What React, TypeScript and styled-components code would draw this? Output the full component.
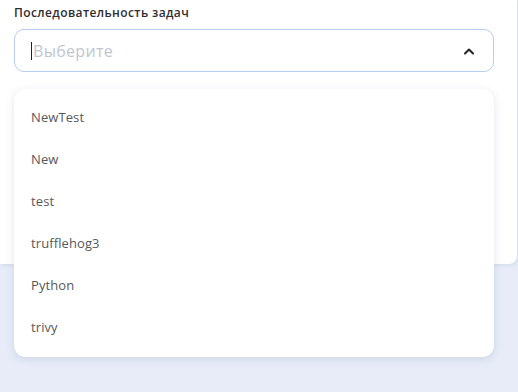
import React from "react";
import styled, { createGlobalStyle } from "styled-components";

const Global = createGlobalStyle`
  html, body { margin: 0; padding: 0; }
  body {
    background: #e7ecf8;
    font-family: "Open Sans", "Noto Sans", sans-serif;
    width: 518px;
    height: 392px;
    overflow: hidden;
  }
`;

const Page = styled.div`
  position: relative;
  width: 518px;
  height: 392px;
`;

const Card = styled.div`
  width: 517px;
  height: 264px;
  background: #ffffff;
  border-bottom-right-radius: 8px;
  box-shadow: 1px 1px 4px rgba(150, 160, 190, 0.25);
  padding: 4px 24px 0 14px;
  box-sizing: border-box;
`;

const Field = styled.div`
  position: relative;
  width: 480px;
  display: flex;
  flex-direction: column;
  gap: 7px;
`;

const Label = styled.div`
  font-size: 12px;
  font-weight: 600;
  color: #2e2e33;
  line-height: 18px;
  letter-spacing: 0.4px;
`;

const SelectBox = styled.div`
  height: 43px;
  box-sizing: border-box;
  border: 1px solid #b7cdf3;
  border-radius: 10px;
  display: flex;
  align-items: center;
  padding: 0 18px 0 16px;
  background: #fff;
`;

const Caret = styled.span`
  width: 1px;
  height: 18px;
  background: #222;
  margin-right: 1px;
`;

const Placeholder = styled.span`
  flex: 1;
  font-size: 16px;
  color: #c0c6d1;
  letter-spacing: 0.3px;
`;

const Menu = styled.ul`
  position: absolute;
  left: 0;
  top: 85px;
  width: 480px;
  margin: 0;
  padding: 7px 0 9px;
  list-style: none;
  background: #fff;
  border-radius: 12px;
  box-shadow: 0 2px 8px rgba(120, 130, 160, 0.22);
  box-sizing: border-box;
`;

const Item = styled.li`
  height: 42px;
  display: flex;
  align-items: center;
  padding-left: 17px;
  font-size: 13px;
  color: #58585d;
  letter-spacing: 0.1px;
`;

const items = ["NewTest", "New", "test", "trufflehog3", "Python", "trivy"];

export default function App() {
  return (
    <>
      <Global />
      <Page>
        <Card>
          <Field>
            <Label>Последовательность задач</Label>
            <SelectBox>
              <Caret />
              <Placeholder>Выберите</Placeholder>
              <svg width="12" height="8" viewBox="0 0 12 8">
                <path d="M2 6.5 L6 2.5 L10 6.5" fill="none" stroke="#222" strokeWidth="2" strokeLinecap="round" strokeLinejoin="round" />
              </svg>
            </SelectBox>
            <Menu>
              {items.map((t) => (
                <Item key={t}>{t}</Item>
              ))}
            </Menu>
          </Field>
        </Card>
      </Page>
    </>
  );
}
